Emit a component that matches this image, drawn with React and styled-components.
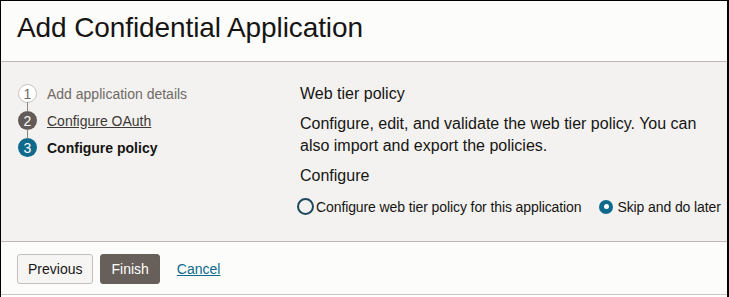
import React from 'react';
import styled, { createGlobalStyle } from 'styled-components';

const GlobalStyle = createGlobalStyle`
  html, body {
    margin: 0;
    padding: 0;
    background: #ffffff;
  }
  body {
    font-family: "Liberation Sans", Arial, sans-serif;
  }
`;

const Frame = styled.div`
  width: 729px;
  height: 297px;
  box-sizing: border-box;
  border-top: 1px solid #000;
  border-left: 1px solid #000;
  border-right: 2px solid #000;
  display: flex;
  flex-direction: column;
  overflow: hidden;
`;

const Header = styled.div`
  height: 61px;
  flex-shrink: 0;
  box-sizing: border-box;
  background: #fcfcfa;
  border-bottom: 1px solid #bcb7b2;
  padding: 11px 0 0 16px;
`;

const Title = styled.h1`
  margin: 0;
  font-size: 28px;
  line-height: 32px;
  font-weight: normal;
  color: #161513;
  letter-spacing: -0.1px;
`;

const Body = styled.div`
  height: 180px;
  flex-shrink: 0;
  box-sizing: border-box;
  background: #f3f2f0;
  border-bottom: 1px solid #bcb7b2;
  display: flex;
`;

const Steps = styled.div`
  width: 281px;
  flex-shrink: 0;
  padding: 22px 0 0 17px;
  box-sizing: border-box;
  display: flex;
  flex-direction: column;
`;

const Step = styled.div`
  display: flex;
  align-items: center;
  gap: 10px;
  height: 19px;
  position: relative;
  & + & {
    margin-top: 8px;
  }
  & + &::before {
    content: '';
    position: absolute;
    left: 9px;
    top: -9px;
    width: 1px;
    height: 10px;
    background: #8a8581;
  }
`;

const Circle = styled.span`
  width: 19px;
  height: 19px;
  border-radius: 50%;
  box-sizing: border-box;
  display: flex;
  align-items: center;
  justify-content: center;
  font-size: 14px;
  flex-shrink: 0;
  background: ${p => p.state === 'done' ? '#ffffff' : p.state === 'visited' ? '#625b57' : '#0f6a8c'};
  border: ${p => p.state === 'done' ? '1px solid #c8c4c0' : 'none'};
  color: ${p => p.state === 'done' ? '#6f6a66' : '#ffffff'};
`;

const StepLabel = styled.span`
  font-size: 14px;
  color: ${p => p.state === 'done' ? '#6f6a66' : p.state === 'visited' ? '#3d3936' : '#161513'};
  font-weight: ${p => p.state === 'current' ? 'bold' : 'normal'};
  text-decoration: ${p => p.state === 'visited' ? 'underline' : 'none'};
`;

const Content = styled.div`
  flex: 1;
  min-width: 0;
  padding: 22px 0 0 18px;
  color: #161513;
  white-space: nowrap;
`;

const SectionTitle = styled.div`
  font-size: 16px;
  line-height: 20px;
  margin-bottom: 9px;
`;

const Description = styled.p`
  margin: 0 0 9px;
  font-size: 16px;
  line-height: 22px;
  width: 410px;
  white-space: normal;
`;

const RadioRow = styled.div`
  display: flex;
  align-items: center;
  margin-top: 12px;
  margin-left: -3px;
`;

const RadioOption = styled.label`
  display: flex;
  align-items: center;
  gap: 2px;
  font-size: 14px;
  letter-spacing: -0.1px;
  flex-shrink: 0;
  & + & {
    margin-left: 18px;
    gap: 4px;
  }
`;

const RadioDot = styled.span`
  width: ${p => p.checked ? '14px' : '17px'};
  height: ${p => p.checked ? '14px' : '17px'};
  border-radius: 50%;
  box-sizing: border-box;
  border: 2px solid ${p => p.checked ? '#0f6a8c' : '#1d4b5c'};
  background: ${p => p.checked ? '#0f6a8c' : 'transparent'};
  display: flex;
  align-items: center;
  justify-content: center;
  &::after {
    content: '';
    width: 5px;
    height: 5px;
    border-radius: 50%;
    background: ${p => p.checked ? '#ffffff' : 'transparent'};
  }
`;

const Footer = styled.div`
  flex: 1;
  background: #fcfcfa;
  border-bottom: 1px solid #c9c6c2;
  margin-bottom: 2px;
  display: flex;
  align-items: center;
  padding: 0 0 0 16px;
  gap: 7px;
`;

const Button = styled.button`
  height: 30px;
  padding: 0 10px;
  border-radius: 3px;
  font-family: "Liberation Sans", Arial, sans-serif;
  font-size: 14px;
  cursor: pointer;
  margin-top: 1px;
  background: ${p => p.variant === 'primary' ? '#675f5a' : '#f6f5f3'};
  color: ${p => p.variant === 'primary' ? '#ffffff' : '#161513'};
  border: 1px solid ${p => p.variant === 'primary' ? '#675f5a' : '#c3bfbb'};
`;

const LinkButton = styled.a`
  margin-left: 10px;
  margin-top: 1px;
  font-size: 14px;
  color: #0f6a8c;
  text-decoration: underline;
  cursor: pointer;
`;

const steps = [
  { n: 1, label: 'Add application details', state: 'done' },
  { n: 2, label: 'Configure OAuth', state: 'visited' },
  { n: 3, label: 'Configure policy', state: 'current' },
];

export default function App() {
  return (
    <>
      <GlobalStyle />
      <Frame>
        <Header>
          <Title>Add Confidential Application</Title>
        </Header>
        <Body>
          <Steps>
            {steps.map(s => (
              <Step key={s.n}>
                <Circle state={s.state}>{s.n}</Circle>
                <StepLabel state={s.state}>{s.label}</StepLabel>
              </Step>
            ))}
          </Steps>
          <Content>
            <SectionTitle>Web tier policy</SectionTitle>
            <Description>
              Configure, edit, and validate the web tier policy. You can also import and export the policies.
            </Description>
            <SectionTitle>Configure</SectionTitle>
            <RadioRow>
              <RadioOption>
                <RadioDot />
                Configure web tier policy for this application
              </RadioOption>
              <RadioOption>
                <RadioDot checked />
                Skip and do later
              </RadioOption>
            </RadioRow>
          </Content>
        </Body>
        <Footer>
          <Button>Previous</Button>
          <Button variant="primary">Finish</Button>
          <LinkButton>Cancel</LinkButton>
        </Footer>
      </Frame>
    </>
  );
}
